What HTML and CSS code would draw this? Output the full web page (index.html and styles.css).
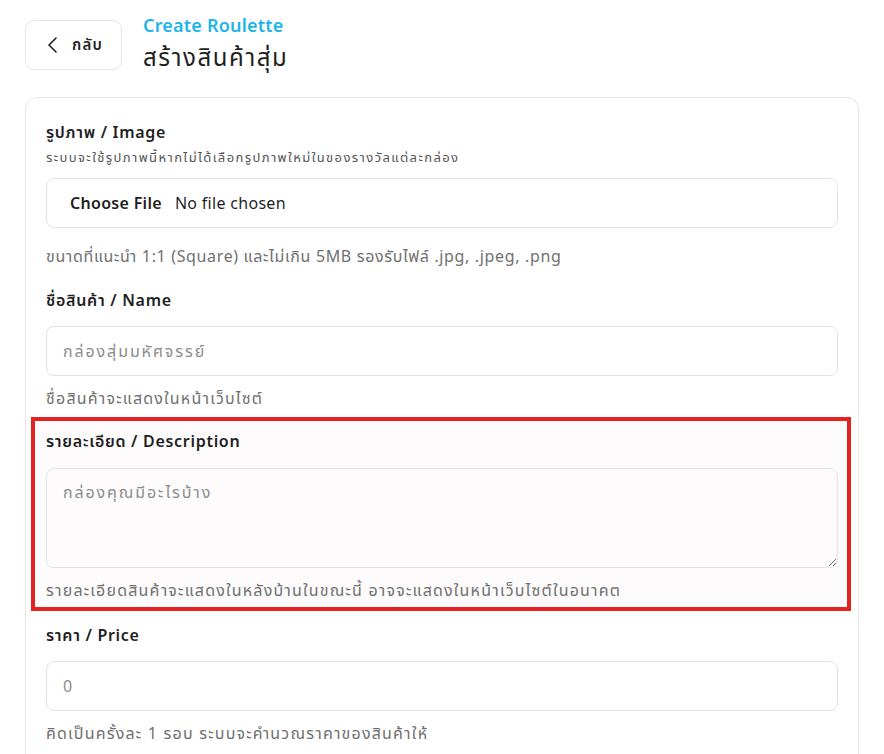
FILE: index.html
```html
<!DOCTYPE html>
<html lang="th">
<head>
    <meta charset="UTF-8">
    <meta name="viewport" content="width=device-width, initial-scale=1.0">
    <title>Create Roulette</title>
    <link rel="stylesheet" href="styles.css">
</head>
<body>

    <div class="header">
        <button class="backBtn" type="button">
            <svg width="14" height="18" viewBox="0 0 14 18"><path d="M10 2 L3 9 L10 16" fill="none" stroke="#222" stroke-width="1.6" stroke-linecap="round" stroke-linejoin="round"/></svg>
            <span>กลับ</span>
        </button>
        <div class="titles">
            <div class="subTitle">Create Roulette</div>
            <h1>สร้างสินค้าสุ่ม</h1>
        </div>
    </div>

    <div class="card">
        <div class="field">
            <label>รูปภาพ / Image</label>
            <div class="note">ระบบจะใช้รูปภาพนี้หากไม่ได้เลือกรูปภาพใหม่ในของรางวัลแต่ละกล่อง</div>
            <div class="fileBox">
                <span class="chooseBtn">Choose File</span>
                <span>No file chosen</span>
            </div>
            <div class="hint mixed">ขนาดที่แนะนำ 1:1 (Square) และไม่เกิน 5MB รองรับไฟล์ .jpg, .jpeg, .png</div>
        </div>

        <div class="field">
            <label>ชื่อสินค้า / Name</label>
            <input class="textInput" type="text" placeholder="กล่องสุ่มมหัศจรรย์">
            <div class="hint">ชื่อสินค้าจะแสดงในหน้าเว็บไซต์</div>
        </div>

        <div class="field marked">
            <label>รายละเอียด / Description</label>
            <textarea class="textArea" placeholder="กล่องคุณมีอะไรบ้าง"></textarea>
            <div class="hint">รายละเอียดสินค้าจะแสดงในหลังบ้านในขณะนี้ อาจจะแสดงในหน้าเว็บไซต์ในอนาคต</div>
        </div>

        <div class="field">
            <label>ราคา / Price</label>
            <input class="textInput" type="text" placeholder="0">
            <div class="hint">คิดเป็นครั้งละ 1 รอบ ระบบจะคำนวณราคาของสินค้าให้</div>
        </div>
    </div>

</body>
</html>
```

FILE: styles.css
```css
body{
    margin: 0;
    padding: 20px 25px 0 25px;
    font-family: "Noto Sans", "Noto Sans Thai", "DejaVu Sans", sans-serif;
    color: #1f1f1f;
    background-color: #fff;
}
.header{
    display: flex;
    align-items: flex-start;
    gap: 21px;
}
.backBtn{
    display: flex;
    align-items: center;
    gap: 12px;
    height: 50px;
    width: 97px;
    padding: 0 0 0 20px;
    border: 1px solid #e6e6e6;
    border-radius: 9px;
    background-color: #fff;
    font-family: inherit;
    font-size: 15px;
    font-weight: 600;
    letter-spacing: 1.2px;
    color: #222;
}
.titles{
    margin-top: -7px;
}
.subTitle{
    color: #1eb4ea;
    font-size: 18px;
    font-weight: 600;
    line-height: 24px;
    letter-spacing: 0.2px;
}
h1{
    margin: 3px 0 0 0;
    font-size: 24px;
    font-weight: 400;
    line-height: 34px;
    letter-spacing: 1.6px;
}
.card{
    margin-top: 23px;
    width: 834px;
    box-sizing: border-box;
    border: 1px solid #e6e6e6;
    border-bottom: none;
    border-radius: 12px 12px 0 0;
    padding: 22px 20px 0 20px;
    height: 657px;
    overflow: hidden;
}
.field{
    display: flex;
    flex-direction: column;
    margin-bottom: 20px;
}
.field label{
    font-size: 16px;
    font-weight: 600;
    line-height: 24px;
    letter-spacing: 0.7px;
    margin-bottom: 14px;
}
.note{
    font-size: 13px;
    color: #555;
    line-height: 18px;
    letter-spacing: 1.4px;
    margin: -10px 0 12px 0;
}
.fileBox{
    display: flex;
    align-items: center;
    gap: 13px;
    height: 50px;
    box-sizing: border-box;
    border: 1px solid #e3e3e3;
    border-radius: 8px;
    padding: 0 23px;
    font-size: 16px;
    letter-spacing: 0.3px;
}
.chooseBtn{
    font-weight: 600;
}
.textInput, .textArea{
    all: unset;
    box-sizing: border-box;
    border: 1px solid #e3e3e3;
    border-radius: 8px;
    padding: 0 16px;
    height: 50px;
    font-size: 16px;
    letter-spacing: 1.9px;
    color: #222;
}
.textInput::placeholder, .textArea::placeholder{
    color: #8c8c8c;
}
.textArea{
    display: block;
    height: 100px;
    margin-top: 1px;
    padding: 12px 16px;
    resize: vertical;
    white-space: pre-wrap;
}
.hint{
    font-size: 16px;
    color: #707070;
    line-height: 24px;
    letter-spacing: 1.2px;
    margin-top: 10px;
}
.fileBox + .hint{
    margin-top: 16px;
}
.hint.mixed{
    letter-spacing: 0.65px;
}
.marked{
    margin: -13px -13px 12px -15px;
    padding: 8px 9px 5px 11px;
    border: 4px solid #e52222;
    background-color: #fdfbfc;
}
.marked .textArea{
    background-color: #fdfbfc;
}
```
